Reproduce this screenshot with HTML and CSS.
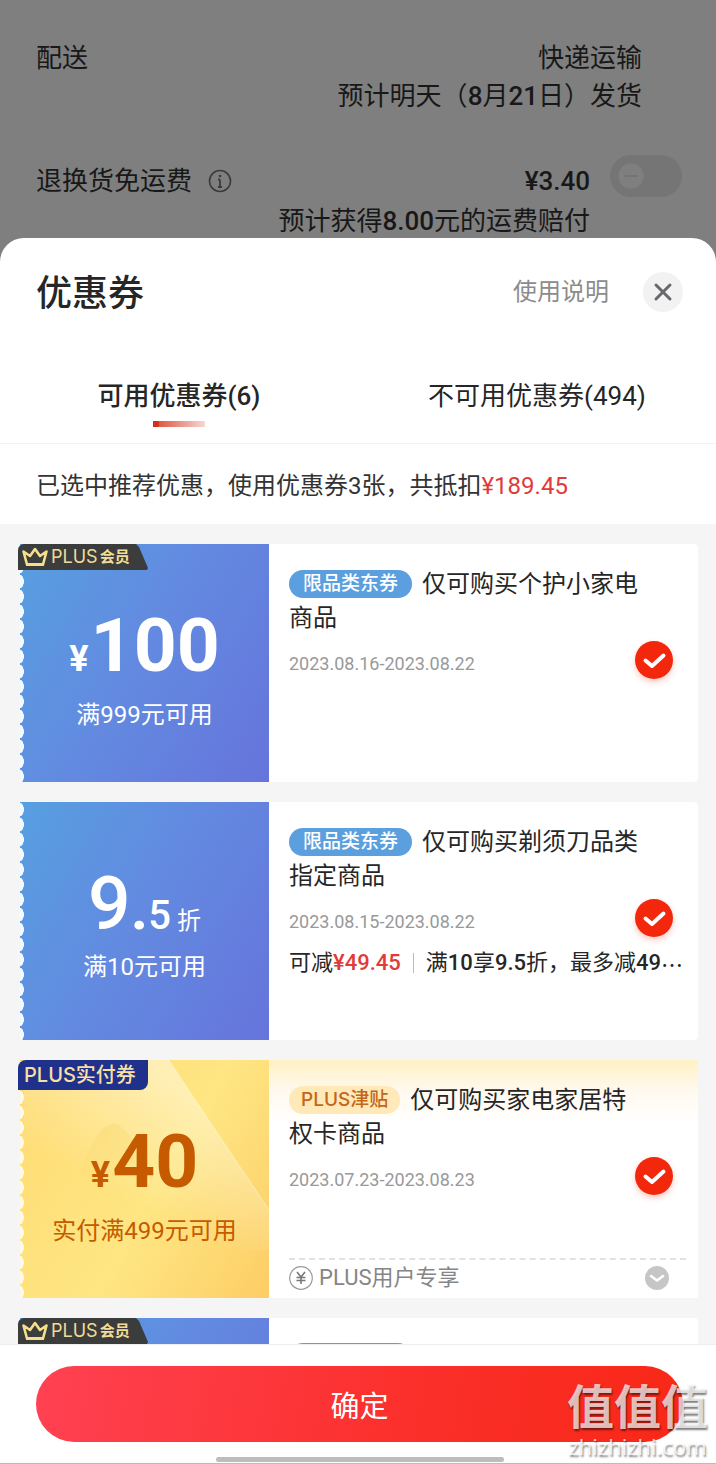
FILE: index.html
```html
<!DOCTYPE html>
<html lang="zh-CN">
<head>
<meta charset="utf-8">
<meta name="viewport" content="width=device-width, initial-scale=1">
<title>优惠券</title>
<link rel="stylesheet" href="styles.css">
</head>
<body>
<svg width="0" height="0" class="sprite" aria-hidden="true">
  <symbol id="crown" viewBox="0 0 26 20">
    <path d="M1.5 4.5 L5 17.5 H21 L24.5 4.5 L18 9 L13 2 L8 9 Z" fill="none" stroke="#f5df8d" stroke-width="2.6" stroke-linejoin="round"/>
    <path d="M4 17.5 H22" stroke="#f5df8d" stroke-width="3"/>
  </symbol>
  <symbol id="tick" viewBox="0 0 38 38">
    <path d="M10.5 19.5 L17 25 L28.5 14.5" fill="none" stroke="#fff" stroke-width="4" stroke-linecap="round" stroke-linejoin="round"/>
  </symbol>
</svg>
<div class="screen">
  <section class="order">
    <div class="order-row">
      <span class="order-name">配送</span>
      <div class="order-value order-value-wide">快递运输<br>预计明天（<b>8</b>月<b>21</b>日）发货</div>
    </div>
    <div class="order-row order-row-return">
      <label class="order-name" for="insure">退换货免运费
        <svg class="info-icon" viewBox="0 0 24 24"><circle cx="12" cy="12" r="10.5" fill="none" stroke="#3c3c3c" stroke-width="1.6"/><path d="M12 10.5V18M10 10.5h2M10 18h4" stroke="#3c3c3c" stroke-width="1.8" fill="none"/><circle cx="12" cy="7" r="1.3" fill="#3c3c3c"/></svg>
      </label>
      <div class="order-value"><b>¥3.40</b><br>预计获得<b>8.00</b>元的运费赔付</div>
      <input class="switch" type="checkbox" id="insure">
    </div>
  </section>

  <main class="sheet">
    <header class="sheet-head">
      <h1 class="sheet-title">优惠券</h1>
      <a class="help" href="#">使用说明</a>
      <button class="close" type="button" aria-label="关闭">
        <svg viewBox="0 0 40 40"><path d="M13 13 L27 27 M27 13 L13 27" stroke="#66686c" stroke-width="3" stroke-linecap="round"/></svg>
      </button>
    </header>
    <nav class="tabs">
      <button class="tab tab-active" type="button">可用优惠券(6)</button>
      <button class="tab" type="button">不可用优惠券(494)</button>
    </nav>
    <p class="summary">已选中推荐优惠，使用优惠券3张，共抵扣<span class="saved">¥189.45</span></p>

    <div class="coupons">
      <article class="coupon">
        <div class="face">
          <div class="tag tag-member"><svg class="crown"><use href="#crown"/></svg>PLUS<span class="tag-small">会员</span></div>
          <div class="amount"><span class="yen">¥</span>100</div>
          <div class="rule">满999元可用</div>
        </div>
        <div class="info">
          <h2 class="name"><span class="pill">限品类东券</span>仅可购买个护小家电商品</h2>
          <div class="pick"><label class="date" for="c1">2023.08.16-2023.08.22</label>
            <span class="check"><input type="checkbox" id="c1" checked><svg><use href="#tick"/></svg></span></div>
        </div>
      </article>

      <article class="coupon">
        <div class="face">
          <div class="amount amount-rate">9<span class="dot">.</span><span class="tenth">5</span><span class="unit">折</span></div>
          <div class="rule rule-near">满10元可用</div>
        </div>
        <div class="info">
          <h2 class="name"><span class="pill">限品类东券</span>仅可购买剃须刀品类指定商品</h2>
          <div class="pick"><label class="date" for="c2">2023.08.15-2023.08.22</label>
            <span class="check"><input type="checkbox" id="c2" checked><svg><use href="#tick"/></svg></span></div>
          <p class="detail"><span>可减<b class="cut">¥49.45</b></span><span class="terms">满<b>10</b>享<b>9.5</b>折，最多减<b>49</b><span class="more">…</span></span></p>
        </div>
      </article>

      <article class="coupon coupon-gold">
        <div class="face">
          <svg class="shine" viewBox="0 0 249 238" preserveAspectRatio="none">
            <defs>
              <linearGradient id="beam" x1="0.2" y1="1" x2="0.75" y2="0.2"><stop offset="0.35" stop-color="#fff" stop-opacity="0"/><stop offset="1" stop-color="#fff" stop-opacity="0.42"/></linearGradient>
              <linearGradient id="hump" x1="0" y1="0" x2="0.2" y2="1"><stop offset="0" stop-color="#f7cf60" stop-opacity="0.35"/><stop offset="0.6" stop-color="#f7cf60" stop-opacity="0"/></linearGradient>
            </defs>
            <path d="M0 0H147Q194 70 249 150V190Q90 190 0 140Z" fill="url(#beam)"/>
            <path d="M147 0Q194 70 249 150" fill="none" stroke="#fff" stroke-opacity="0.45"/>
            <path d="M58 110Q76 60 94 64Q110 70 158 150L80 170Z" fill="url(#hump)"/>
          </svg>
          <div class="tag tag-paid">PLUS实付券</div>
          <div class="amount"><span class="yen">¥</span>40</div>
          <div class="rule">实付满499元可用</div>
        </div>
        <div class="info">
          <h2 class="name"><span class="pill">PLUS津贴</span>仅可购买家电家居特权卡商品</h2>
          <div class="pick"><label class="date" for="c3">2023.07.23-2023.08.23</label>
            <span class="check"><input type="checkbox" id="c3" checked><svg><use href="#tick"/></svg></span></div>
          <div class="exclusive">
            <svg class="mini" viewBox="0 0 24 24"><circle cx="12" cy="12" r="11.3" fill="none" stroke="#999" stroke-width="1.2"/><path d="M8 6L12 11L16 6M12 11V18M7.5 11.5H16.5M7.5 14.5H16.5" fill="none" stroke="#777" stroke-width="1.6"/></svg>
            <span>PLUS用户专享</span>
            <button class="expand" type="button" aria-label="展开"><svg class="mini" viewBox="0 0 24 24"><circle cx="12" cy="12" r="12" fill="#c6c6c6"/><path d="M6 10L12 14.5L18 10" fill="none" stroke="#fff" stroke-width="2.6" stroke-linecap="round" stroke-linejoin="round"/></svg></button>
          </div>
        </div>
      </article>

      <article class="coupon">
        <div class="face">
          <div class="tag tag-member"><svg class="crown"><use href="#crown"/></svg>PLUS<span class="tag-small">会员</span></div>
        </div>
        <div class="info">
          <div class="name"><span class="pill pill-blank"></span></div>
        </div>
      </article>
    </div>

    <footer class="actions">
      <button class="confirm" type="button">确定</button>
      <div class="home-bar"></div>
    </footer>
  </main>
  <div class="watermark"><div class="mark-name">值值值</div><div class="mark-site">zhizhizhi.com</div></div>
</div>
</body>
</html>
```
FILE: styles.css
```css
* { box-sizing: border-box; }
body, h1, h2, p { margin: 0; }
body {
  font-family: Roboto, "Noto Sans CJK SC", sans-serif;
  color: #262626;
  background: #7f7f7f;
}
button { font: inherit; color: inherit; border: 0; padding: 0; background: none; }
input { margin: 0; }
b { font-weight: 500; }
.sprite { position: absolute; }

.screen {
  position: relative;
  display: flex;
  flex-direction: column;
  height: 100vh;
  overflow: hidden;
}

/* Dimmed order page */
.order {
  height: 238px;
  flex: none;
  padding: 39px 34px 0 36px;
  color: #181818;
  font-size: 26px;
  line-height: 38px;
}
.order-row { display: flex; align-items: flex-start; }
.order-row-return { margin-top: 46px; line-height: 40px; }
.order-name { display: flex; align-items: center; gap: 16px; }
.order-value { margin-left: auto; text-align: right; }
.order-value-wide { margin-right: 40px; }
.info-icon { width: 24px; height: 24px; }
.switch {
  appearance: none;
  width: 72px;
  height: 42px;
  margin: -6px 0 0 20px;
  border-radius: 21px;
  background:
    linear-gradient(#747474, #747474) 14px 20px / 14px 2px no-repeat,
    radial-gradient(circle at 21px 21px, #7f7f7f 12px, transparent 13px),
    #757575;
}

/* Sheet */
.sheet {
  flex: 1;
  min-height: 0;
  display: flex;
  flex-direction: column;
  background: #fff;
  border-radius: 24px 24px 0 0;
  overflow: hidden;
}
.sheet-head {
  display: flex;
  align-items: center;
  padding: 26px 33px 0 36px;
  height: 82px;
}
.sheet-title { padding-top: 4px; font-size: 36px; font-weight: 500; line-height: 52px; margin-right: auto; }
.help { font-size: 24px; line-height: 24px; color: #8c8c8c; text-decoration: none; }
.close { width: 40px; height: 40px; margin-left: 34px; border-radius: 50%; background: #f2f2f2; }
.close svg { display: block; }
.tabs {
  display: flex;
  height: 124px;
  padding-top: 38px;
  border-bottom: 1px solid #f2f2f2;
}
.tab {
  flex: 1;
  display: flex;
  flex-direction: column;
  align-items: center;
  font-size: 26px;
  line-height: 76px;
}
.tab-active { font-weight: 500; }
.tab-active::after {
  content: "";
  width: 52px;
  height: 6px;
  margin-top: -13px;
  background: linear-gradient(90deg, #d0301c 10%, #dd5a48 12%, #f6d8d2);
}
.summary { padding: 22px 36px 18px; font-size: 24px; line-height: 40px; color: #333; }
.saved { color: #e23a3a; }

/* Coupons */
.coupons {
  flex: 1;
  min-height: 0;
  overflow: hidden;
  display: flex;
  flex-direction: column;
  gap: 20px;
  padding: 20px 18px 0 20px;
  background: #f5f5f5;
}
.coupon { flex: none; display: flex; height: 238px; background: #fff; border-radius: 4px; }
.face {
  position: relative;
  width: 249px;
  flex: none;
  padding-top: 65px;
  text-align: center;
  color: #fff;
  background:
    radial-gradient(ellipse 4px 7px at 0 50%, #f3faff 90%, transparent) 0 0 / 8px 15px repeat-y,
    linear-gradient(120deg, #579fe0, #628be0 45%, #6674dc);
}
.coupon-gold .face {
  color: #c55a00;
  background:
    radial-gradient(ellipse 4px 7px at 0 50%, #fdf8e8 90%, transparent) 0 0 / 8px 15px repeat-y,
    linear-gradient(120deg, #fedb72, #fee683 55%, #fdcd65);
}
.shine { position: absolute; inset: 0 0 0 4px; width: 245px; height: 100%; }
.amount {
  position: relative;
  display: flex;
  justify-content: center;
  align-items: baseline;
  height: 72px;
  font-size: 75px;
  line-height: 72px;
  font-weight: 700;
}
.yen { font-size: 36px; margin-right: 2px; }
.amount-rate { font-weight: 500; }
.dot { font-weight: 700; font-size: 60px; }
.tenth { font-size: 40px; }
.unit { font-size: 24px; font-weight: 400; margin-left: 6px; }
.rule { position: relative; margin-top: 18px; font-size: 24px; line-height: 32px; }
.rule-near { margin-top: 12px; }
.tag {
  position: absolute;
  z-index: 1;
  top: 0;
  left: -2px;
  width: 130px;
  display: flex;
  align-items: center;
  border-radius: 6px 0 0 0;
  font-family: Inter, "Noto Sans CJK SC", sans-serif;
  white-space: nowrap;
}
.tag-member {
  height: 26px;
  padding-left: 4px;
  font-size: 18px;
  line-height: 22px;
  color: #f0dc98;
  background: #3b3c3c;
  clip-path: polygon(0 0, 118px 0, 121px 3px, 130px 24px, 129px 26px, 0 26px);
}
.tag-small { font-size: 15px; font-weight: 700; margin-left: 2px; }
.crown { width: 26px; height: 20px; margin-right: 3px; }
.tag-paid {
  height: 30px;
  padding-left: 6px;
  font-size: 20px;
  line-height: 28px;
  font-weight: 500;
  color: #f8dfa4;
  background: #20318c;
  border-radius: 8px 0 8px 0;
}

.info {
  flex: 1;
  min-width: 0;
  display: flex;
  flex-direction: column;
  padding: 23px 12px 0 20px;
}
.coupon-gold .info { background: linear-gradient(#fff0c4, #fffaf0 32px, #fff 64px); }
.name { max-width: 350px; font-size: 24px; font-weight: 400; line-height: 34px; }
.pill {
  display: inline-block;
  height: 28px;
  margin-right: 10px;
  padding: 0 14px;
  border-radius: 14px;
  font-family: Inter, "Noto Sans CJK SC", sans-serif;
  font-size: 19px;
  font-weight: 500;
  line-height: 28px;
  vertical-align: 2px;
  color: #fff;
  background: #5b9fdf;
}
.coupon-gold .pill { padding: 0 12px; color: #c4661a; background: #ffe9b8; }
.pill-blank { display: block; width: 123px; margin-top: 2px; }
.pick {
  display: flex;
  align-items: center;
  justify-content: space-between;
  margin-top: 6px;
  padding-right: 13px;
}
.date {
  padding-top: 8px;
  font-size: 18px;
  line-height: 24px;
  color: #999;
}
.check { display: grid; width: 38px; height: 38px; }
.check > * { grid-area: 1 / 1; width: 38px; height: 38px; pointer-events: none; }
.check input {
  appearance: none;
  border-radius: 50%;
  background: #f2270c;
  box-shadow: 0 3px 6px #f2270c40;
  pointer-events: auto;
}
.detail {
  display: flex;
  margin: 12px 6px 0 0;
  font-size: 22px;
  line-height: 28px;
  white-space: nowrap;
}
.cut { color: #e23a3a; }
.terms {
  display: flex;
  margin-left: 12px;
  padding-left: 13px;
  background: linear-gradient(#bbb, #bbb) 0 4px / 1px 20px no-repeat;
}
.more { font-family: "Noto Sans CJK SC", sans-serif; }
.exclusive {
  display: flex;
  align-items: center;
  gap: 6px;
  height: 40px;
  margin-top: auto;
  padding: 0 17px 2px 0;
  border-top: 2px dashed #e2e2e2;
  font-size: 22px;
  line-height: 28px;
  color: #858585;
}
.mini { display: block; width: 24px; height: 24px; }
.expand { margin-left: auto; }

/* Footer */
.actions {
  height: 120px;
  flex: none;
  padding: 21px 33px 0 36px;
  border-top: 1px solid #eee;
  border-bottom: 1px solid #bbb;
}
.confirm {
  width: 100%;
  height: 76px;
  border-radius: 38px;
  font-size: 29px;
  color: #fff;
  background: linear-gradient(100deg, #ff4152, #fb2f2a 60%, #f82816);
}
.home-bar { width: 288px; height: 5px; margin: 15px auto 0; border-radius: 3px; background: #bdbdbd; }

.watermark {
  position: absolute;
  right: 8px;
  bottom: 6px;
  text-align: center;
  color: #ffffffb8;
  text-shadow: 1px 2px 2px #00000080;
  pointer-events: none;
}
.mark-name { font-size: 47px; line-height: 52px; font-weight: 700; }
.mark-site { font-family: "Open Sans", sans-serif; font-size: 22px; line-height: 24px; color: #fffc; }
```
